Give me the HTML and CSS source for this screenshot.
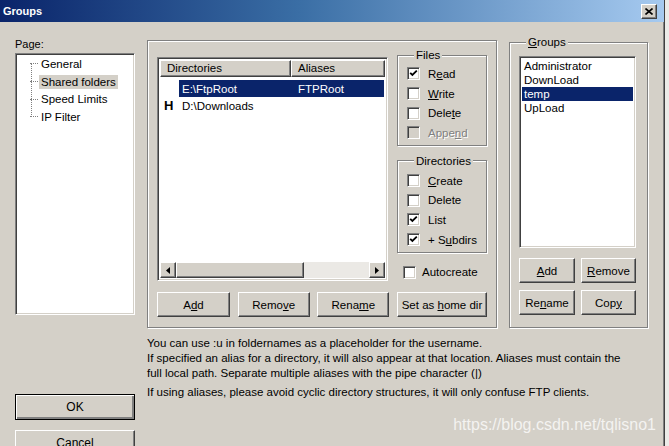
FILE: index.html
```html
<!DOCTYPE html>
<html>
<head>
<meta charset="utf-8">
<link rel="stylesheet" href="styles.css">
</head>
<body>
<div class="window">
  <div class="titlebar">
    <span class="title">Groups</span>
    <span class="close raised"><svg width="8" height="7" viewBox="0 0 8 7"><path d="M0.5 0.5 L7.5 6.5 M7.5 0.5 L0.5 6.5" stroke="#000" stroke-width="1.6" fill="none"/></svg></span>
  </div>
  <div class="content">
    <div class="col-left">
      <div class="label">Page:</div>
      <div class="tree sunken">
        <ul class="tree-list">
          <li><span class="tree-text">General</span></li>
          <li><span class="tree-text sel">Shared folders</span></li>
          <li><span class="tree-text">Speed Limits</span></li>
          <li><span class="tree-text">IP Filter</span></li>
        </ul>
      </div>
    </div>

    <div class="col-mid">
      <div class="panel etched">
        <div class="panel-top">
          <div class="listview sunken">
            <div class="lv-header">
              <div class="lv-col c1 raised">Directories</div>
              <div class="lv-col c2 raised">Aliases</div>
            </div>
            <div class="lv-rows">
              <div class="lv-row">
                <span class="lv-icon"></span>
                <span class="lv-cells selected"><span class="cell1">E:\FtpRoot</span><span class="cell2">FTPRoot</span></span>
              </div>
              <div class="lv-row">
                <span class="lv-icon">H</span>
                <span class="lv-cells"><span class="cell1">D:\Downloads</span><span class="cell2"></span></span>
              </div>
            </div>
            <div class="hscroll">
              <span class="sb-btn raised"><svg width="4" height="7" viewBox="0 0 4 7"><path d="M4 0 L0 3.5 L4 7 Z" fill="#000"/></svg></span>
              <span class="sb-thumb raised"></span>
              <span class="sb-track"></span>
              <span class="sb-btn raised"><svg width="4" height="7" viewBox="0 0 4 7"><path d="M0 0 L4 3.5 L0 7 Z" fill="#000"/></svg></span>
            </div>
          </div>

          <div class="perm-col">
            <fieldset class="group files">
              <legend>Files</legend>
              <div class="check"><span class="box"><svg class="tick" width="9" height="9" viewBox="0 0 9 9"><path d="M1.2 3.8 L3.4 6 L7.8 1.6" stroke="#000" stroke-width="1.8" fill="none"/></svg></span><span>R<u>e</u>ad</span></div>
              <div class="check"><span class="box"></span><span><u>W</u>rite</span></div>
              <div class="check"><span class="box"></span><span>Dele<u>t</u>e</span></div>
              <div class="check disabled"><span class="box"></span><span>Appe<u>n</u>d</span></div>
            </fieldset>
            <fieldset class="group dirs">
              <legend>Directories</legend>
              <div class="check"><span class="box"></span><span><u>C</u>reate</span></div>
              <div class="check"><span class="box"></span><span>Delete</span></div>
              <div class="check"><span class="box"><svg class="tick" width="9" height="9" viewBox="0 0 9 9"><path d="M1.2 3.8 L3.4 6 L7.8 1.6" stroke="#000" stroke-width="1.8" fill="none"/></svg></span><span>List</span></div>
              <div class="check"><span class="box"><svg class="tick" width="9" height="9" viewBox="0 0 9 9"><path d="M1.2 3.8 L3.4 6 L7.8 1.6" stroke="#000" stroke-width="1.8" fill="none"/></svg></span><span>+ S<u>u</u>bdirs</span></div>
            </fieldset>
            <div class="check autocreate"><span class="box"></span><span>Autocreate</span></div>
          </div>
        </div>
        <div class="panel-buttons">
          <button class="btn raised b-add">A<u>d</u>d</button>
          <button class="btn raised b-remove">Remo<u>v</u>e</button>
          <button class="btn raised b-rename">Rena<u>m</u>e</button>
          <button class="btn raised b-home">Set as <u>h</u>ome dir</button>
        </div>
      </div>
    </div>

    <div class="col-right">
      <fieldset class="group groups">
        <legend><u>G</u>roups</legend>
        <div class="glist sunken">
          <div class="gitem">Administrator</div>
          <div class="gitem">DownLoad</div>
          <div class="gitem selected">temp</div>
          <div class="gitem">UpLoad</div>
        </div>
        <div class="gbuttons">
          <button class="btn raised"><u>A</u>dd</button>
          <button class="btn raised"><u>R</u>emove</button>
          <button class="btn raised">Re<u>n</u>ame</button>
          <button class="btn raised">Cop<u>y</u></button>
        </div>
      </fieldset>
    </div>

    <div class="dlg-buttons">
      <button class="btn raised default">OK</button>
      <button class="btn raised">Cancel</button>
    </div>

    <div class="help">
      <p class="first">You can use :u in foldernames as a placeholder for the username.</p>
      <p>If specified an alias for a directory, it will also appear at that location. Aliases must contain the<br>full local path. Separate multiple aliases with the pipe character (|)</p>
      <p>If using aliases, please avoid cyclic directory structures, it will only confuse FTP clients.</p>
    </div>
  </div>
  <div class="watermark">https://blog.csdn.net/tqlisno1</div>
</div>
</body>
</html>
```

FILE: styles.css
```css
* { box-sizing: border-box; }

body {
  margin: 0;
  background: #ecebe8;
  font-family: "Liberation Sans", Arial, sans-serif;
  font-size: 11px;
  color: #000;
}

.window {
  position: relative;
  width: 665px;
  height: 446px;
  background: #d4d0c8;
  border-right: 1px solid #404040;
  box-shadow: inset -1px 0 #808080;
  overflow: hidden;
}

/* 3D borders */
.raised {
  border: 1px solid;
  border-color: #fff #404040 #404040 #fff;
  box-shadow: inset -1px -1px #808080;
  background: #d4d0c8;
}
.sunken {
  border: 1px solid;
  border-color: #808080 #fff #fff #808080;
  box-shadow: inset 1px 1px #404040, inset -1px -1px #d4d0c8;
  background: #fff;
}
.etched {
  border: 1px solid #808080;
  box-shadow: inset 1px 1px #fff, 1px 1px #fff;
}

/* Title bar */
.titlebar {
  height: 22px;
  background: linear-gradient(to right, #0a246a 0%, #3a6ea5 45%, #a6caf0 100%);
  display: flex;
  align-items: center;
  justify-content: space-between;
  padding: 0 7px 0 3px;
}
.title {
  color: #fff;
  font-weight: bold;
  font-size: 11px;
}
.close {
  width: 16px;
  height: 15px;
  display: flex;
  align-items: center;
  justify-content: center;
}

/* Content grid */
.content {
  display: grid;
  grid-template-columns: 120px 350px 139px;
  column-gap: 12px;
  padding-left: 15px;
}

.col-left { padding-top: 16px; }
.label { line-height: 12px; height: 15px; }
.tree {
  height: 262px;
}
.tree-list {
  position: relative;
  list-style: none;
  margin: 0;
  padding: 1px 0 0 14px;
}
.tree-list::before {
  content: "";
  position: absolute;
  left: 15px;
  top: 9px;
  bottom: 9px;
  border-left: 1px dotted #808080;
}
.tree-list li {
  display: flex;
  align-items: center;
  height: 17.7px;
}
.tree-list li::before {
  content: "";
  width: 8px;
  border-top: 1px dotted #808080;
  margin-right: 1px;
}
.tree-text {
  padding: 0 2px;
  line-height: 14px;
  font-size: 11.5px;
}
.tree-text.sel { background: #d4d0c8; }

/* Middle panel */
.col-mid { padding-top: 18px; }
.panel {
  padding: 8px 9px 10px 9px;
}
.panel-top {
  display: flex;
  gap: 9px;
}
.listview {
  width: 231px;
  height: 224px;
  margin-top: 8px;
  padding: 2px;
  display: flex;
  flex-direction: column;
  font-size: 11.5px;
}
.lv-header {
  display: flex;
  height: 17px;
}
.lv-col {
  padding-left: 6px;
  line-height: 15px;
}
.lv-col.c1 { width: 131px; }
.lv-col.c2 { flex: 1; }
.lv-rows {
  flex: 1;
  padding-top: 3px;
}
.lv-row {
  display: flex;
  height: 17px;
  align-items: center;
}
.lv-icon {
  width: 19px;
  padding-left: 4px;
  font-weight: bold;
  font-size: 13px;
}
.lv-cells {
  display: flex;
  flex: 1;
  height: 17px;
  align-items: center;
  padding-left: 3px;
  margin-right: 1px;
}
.lv-cells.selected { background: #0a246a; color: #fff; }
.cell1 { width: 116px; }
.hscroll {
  display: flex;
  height: 16px;
}
.sb-btn {
  width: 16px;
  height: 16px;
  display: flex;
  align-items: center;
  justify-content: center;
}
.sb-thumb { width: 128px; height: 16px; }
.sb-track { flex: 1; background: #ebe9e5; }

.perm-col {
  width: 90px;
  display: flex;
  flex-direction: column;
}
.group {
  margin: 0;
  padding: 0 0 0 9px;
  border: 1px solid #808080;
  box-shadow: inset 1px 1px #fff, 1px 1px #fff;
}
.group legend {
  margin-left: 7px;
  padding: 0 2px;
  line-height: 12px;
  font-size: 11.5px;
  background: #d4d0c8;
}
.files { padding-top: 3px; padding-bottom: 2px; }
.dirs { margin-top: 9px; padding-top: 4px; padding-bottom: 2px; }
.check {
  display: flex;
  align-items: center;
  height: 19.7px;
  gap: 8px;
  font-size: 11.5px;
}
.box {
  width: 13px;
  height: 13px;
  flex: none;
  border: 1px solid;
  border-color: #808080 #fff #fff #808080;
  box-shadow: inset 1px 1px #404040, inset -1px -1px #d4d0c8;
  background: #fff;
  display: flex;
  align-items: center;
  justify-content: center;
}
.check.disabled { color: #808080; text-shadow: 1px 1px #fff; }
.check.disabled .box { background: #d4d0c8; }
.autocreate {
  margin-top: 10px;
  padding-left: 6px;
  gap: 6px;
}

.panel-buttons {
  display: flex;
  justify-content: space-between;
  margin-top: 10px;
}
.btn {
  font-family: inherit;
  font-size: 11.5px;
  height: 25px;
  padding: 0;
  color: #000;
}
.b-add { width: 73px; }
.b-remove { width: 72px; }
.b-rename { width: 72px; }
.b-home { width: 90px; }

/* Groups */
.col-right { padding-top: 14px; }
.groups {
  padding: 8px 11px 12px 9px;
}
.glist {
  height: 192px;
  padding: 2px;
  font-size: 11.5px;
}
.gitem {
  line-height: 14px;
  padding-left: 2px;
}
.gitem.selected { background: #0a246a; color: #fff; }
.gbuttons {
  display: grid;
  grid-template-columns: 56px 55px;
  justify-content: space-between;
  row-gap: 7px;
  margin-top: 10px;
}
.gbuttons .btn { height: 25px; }

/* bottom */
.dlg-buttons {
  grid-column: 1;
  grid-row: 2;
  display: flex;
  flex-direction: column;
  gap: 10px;
  margin-top: 66px;
}
.dlg-buttons .btn { width: 120px; height: 26px; font-size: 12px; }
.btn.default {
  border: 1px solid #000;
  box-shadow: inset 1px 1px #fff, inset -2px -2px #808080, inset -1px -1px #404040;
}

.help {
  grid-column: 2 / 4;
  grid-row: 2;
  padding-top: 8px;
  font-size: 11.5px;
  line-height: 15px;
}
.help p { margin: 0 0 4px 0; }
.help p.first { margin-bottom: 0; }

.watermark {
  position: absolute;
  right: 8px;
  bottom: 12px;
  font-size: 16px;
  color: rgba(255, 255, 255, 0.75);
}
```
